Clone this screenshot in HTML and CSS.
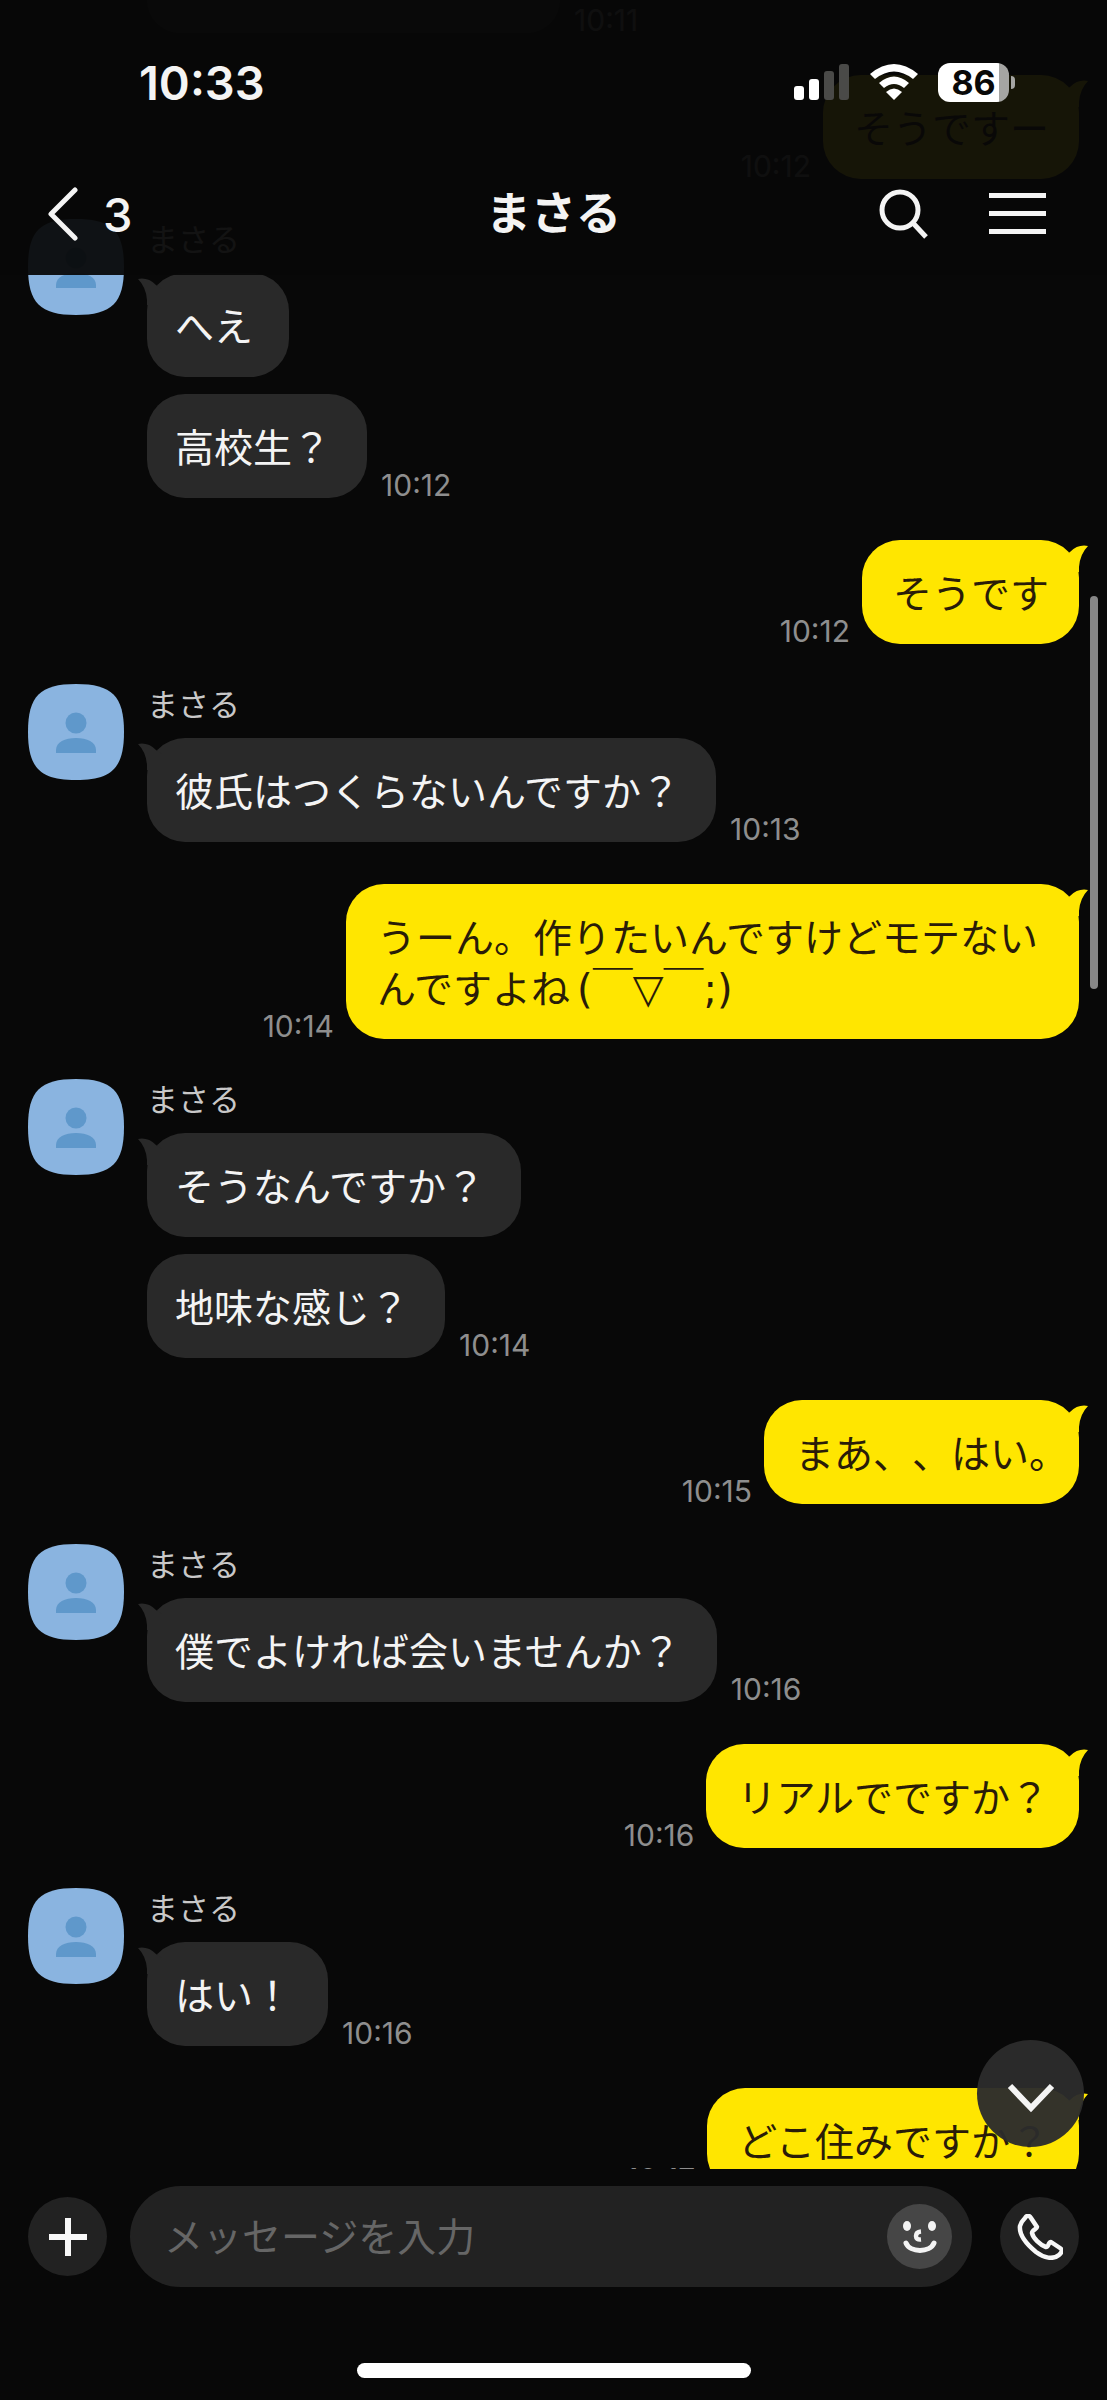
FILE: index.html
```html
<!DOCTYPE html>
<html lang="ja">
<head>
<meta charset="utf-8">
<meta name="viewport" content="width=device-width, initial-scale=1">
<title>まさる</title>
<link rel="stylesheet" href="styles.css">
</head>
<body>
<svg class="defs" aria-hidden="true">
  <symbol id="avatar" viewBox="0 0 96 96">
    <path fill="#8ab4e0" d="M48 0C84 0 96 12 96 48S84 96 48 96 0 84 0 48 12 0 48 0Z"/>
    <circle cx="48" cy="39" r="10.500" fill="#5f98cb"/>
    <path fill="#5f98cb" d="M28 69V66C28 58 37 54 48 54S68 58 68 66V69Z"/>
  </symbol>
  <symbol id="tail" viewBox="0 0 24 32">
    <path d="M0 6Q10 4 18 12L24 16V32H9V27Q8 14 0 6Z"/>
  </symbol>
</svg>
<div class="app">
  <header class="top">
    <div class="status">
      <span class="clock">10:33</span>
      <div class="status-icons">
        <svg width="56" height="36" viewBox="0 0 56 36" aria-hidden="true">
          <g fill="#fff"><rect y="22" width="10" height="14" rx="3"/><rect x="15" y="15" width="10" height="21" rx="3"/></g>
          <g fill="#4a4a48"><rect x="30" y="7" width="10" height="29" rx="3"/><rect x="45" width="10" height="36" rx="3"/></g>
        </svg>
        <svg width="48" height="36" viewBox="0 0 48 36" fill="#fff" aria-hidden="true">
          <path d="M0 10Q24-10 48 10L43 15Q24 0 5 15Z"/>
          <path d="M9 19Q24 6 39 19L34 24Q24 16 14 24Z"/>
          <path d="M16 28Q24 21 32 28L24 36Z"/>
        </svg>
        <div class="battery"><span class="battery-level">86</span></div>
      </div>
    </div>
    <nav class="nav">
      <button class="back" type="button" aria-label="戻る">
        <svg width="30" height="54" viewBox="0 0 30 54" fill="none" stroke="#f4f4f4" stroke-width="5" stroke-linecap="round" stroke-linejoin="round"><path d="M27 3L3 27L27 51"/></svg>
        <span>3</span>
      </button>
      <h1 class="title">まさる</h1>
      <div class="actions">
        <button type="button" aria-label="検索">
          <svg width="50" height="50" viewBox="0 0 50 50" fill="none" stroke="#f4f4f4" stroke-width="5"><circle cx="21" cy="21" r="18"/><path d="M34 34L47 48"/></svg>
        </button>
        <button type="button" aria-label="メニュー">
          <svg width="57" height="42" viewBox="0 0 57 42" fill="#f4f4f4"><path d="M0 0H57V5H0ZM0 18H57V23H0ZM0 36H57V41H0Z"/></svg>
        </button>
      </div>
    </nav>
  </header>

  <main class="feed">
    <section class="group">
      <div class="body">
        <div class="line"><div class="bubble cut"></div><time>10:11</time></div>
      </div>
    </section>
    <section class="group mine">
      <div class="line"><time>10:12</time><p class="bubble"><svg class="tail"><use href="#tail"/></svg>そうですー</p></div>
    </section>
    <section class="group theirs">
      <svg class="avatar"><use href="#avatar"/></svg>
      <div class="body">
        <h2 class="name">まさる</h2>
        <div class="line"><p class="bubble"><svg class="tail"><use href="#tail"/></svg>へえ</p></div>
        <div class="line"><p class="bubble">高校生？</p><time>10:12</time></div>
      </div>
    </section>
    <section class="group mine">
      <div class="line"><time>10:12</time><p class="bubble"><svg class="tail"><use href="#tail"/></svg>そうです</p></div>
    </section>
    <section class="group theirs">
      <svg class="avatar"><use href="#avatar"/></svg>
      <div class="body">
        <h2 class="name">まさる</h2>
        <div class="line"><p class="bubble"><svg class="tail"><use href="#tail"/></svg>彼氏はつくらないんですか？</p><time>10:13</time></div>
      </div>
    </section>
    <section class="group mine">
      <div class="line"><time>10:14</time><p class="bubble"><svg class="tail"><use href="#tail"/></svg>うーん。作りたいんですけどモテないんですよね<span class="kaomoji">(￣▽￣;)</span></p></div>
    </section>
    <section class="group theirs">
      <svg class="avatar"><use href="#avatar"/></svg>
      <div class="body">
        <h2 class="name">まさる</h2>
        <div class="line"><p class="bubble"><svg class="tail"><use href="#tail"/></svg>そうなんですか？</p></div>
        <div class="line"><p class="bubble">地味な感じ？</p><time>10:14</time></div>
      </div>
    </section>
    <section class="group mine">
      <div class="line"><time>10:15</time><p class="bubble"><svg class="tail"><use href="#tail"/></svg><span class="hang">まあ、、はい。</span></p></div>
    </section>
    <section class="group theirs">
      <svg class="avatar"><use href="#avatar"/></svg>
      <div class="body">
        <h2 class="name">まさる</h2>
        <div class="line"><p class="bubble"><svg class="tail"><use href="#tail"/></svg>僕でよければ会いませんか？</p><time>10:16</time></div>
      </div>
    </section>
    <section class="group mine">
      <div class="line"><time>10:16</time><p class="bubble"><svg class="tail"><use href="#tail"/></svg>リアルでですか？</p></div>
    </section>
    <section class="group theirs">
      <svg class="avatar"><use href="#avatar"/></svg>
      <div class="body">
        <h2 class="name">まさる</h2>
        <div class="line"><p class="bubble"><svg class="tail"><use href="#tail"/></svg>はい！</p><time>10:16</time></div>
      </div>
    </section>
    <section class="group mine">
      <div class="line"><time>10:17</time><p class="bubble"><svg class="tail"><use href="#tail"/></svg>どこ住みですか？</p></div>
    </section>
    <div class="thumb"></div>
    <button class="jump" type="button" aria-label="最新のメッセージへ">
      <svg width="48" height="30" viewBox="0 0 48 30" fill="none" stroke="#f4f4f4" stroke-width="6"><path d="M3 3L24 25L45 3"/></svg>
    </button>
  </main>

  <footer class="bottom">
    <form class="composer">
      <button class="round" type="button" aria-label="追加">
        <svg width="38" height="38" viewBox="0 0 38 38" fill="#f8f8f8"><path d="M16 0H22V16H38V22H22V38H16V22H0V16H16Z"/></svg>
      </button>
      <div class="field">
        <input type="text" aria-label="メッセージ" placeholder="メッセージを入力">
        <button class="emoji" type="button" aria-label="スタンプ">
          <svg width="36" height="34" viewBox="0 0 36 34" fill="#f4f4f4"><ellipse cx="5" cy="6" rx="4" ry="5"/><ellipse cx="30" cy="6" rx="4" ry="5"/><path d="M19 11.500Q14 12 14 16T19 19.500" fill="none" stroke="#f4f4f4" stroke-width="4.500"/><path d="M4 23C8 33 28 33 32 23" fill="none" stroke="#f4f4f4" stroke-width="5" stroke-linecap="round"/></svg>
        </button>
      </div>
      <button class="round" type="button" aria-label="通話">
        <svg width="46" height="46" viewBox="0 0 46 46" fill="none" stroke="#f8f8f8" stroke-width="4.500" stroke-linejoin="round"><path d="M8 4C10 1 12 1 14 4L20 13C20 15 15 16 15 19C16 24 23 31 29 33C32 33 31 28 34 28L43 34C46 36 45 38 42 41C36 46 27 44 19 38C8 29 2 20 3 12C4 8 6 6 8 4Z"/></svg>
      </button>
    </form>
    <div class="home"></div>
  </footer>
</div>
</body>
</html>
```
FILE: styles.css
```css
* { box-sizing: border-box; }
body {
  margin: 0;
  background: #080808;
  color: #f4f4f4;
  font-family: Inter, "Noto Sans CJK JP", sans-serif;
}
h1, h2, p { margin: 0; }
svg { display: block; flex: none; }
.defs { position: absolute; width: 0; height: 0; }
button {
  display: flex;
  align-items: center;
  justify-content: center;
  padding: 0;
  border: 0;
  background: none;
  color: inherit;
  font: inherit;
}
.app {
  position: relative;
  display: flex;
  flex-direction: column;
  height: 100vh;
}

/* Translucent header over the scrolled messages */
.top {
  position: absolute;
  z-index: 2;
  top: 0;
  left: 0;
  right: 0;
  padding: 52px 0 26px;
  background: rgba(7, 7, 7, .94);
}
.status {
  display: flex;
  align-items: center;
  justify-content: space-between;
  height: 60px;
  padding: 0 98px 0 139px;
}
.clock { font-size: 47px; font-weight: 600; }
.status-icons { display: flex; align-items: center; gap: 20px; }
.battery {
  position: relative;
  width: 71px;
  height: 39px;
  border-radius: 12px;
  background: linear-gradient(90deg, #fff 61px, #a5a5a3 61px);
}
.battery::after {
  content: "";
  position: absolute;
  left: 73px;
  top: 13px;
  width: 4px;
  height: 13px;
  border-radius: 0 4px 4px 0;
  background: #a5a5a3;
}
.battery-level {
  display: block;
  color: #080808;
  font-size: 34px;
  font-weight: 700;
  line-height: 39px;
  text-align: center;
}
.nav {
  display: grid;
  grid-template-columns: 1fr auto 1fr;
  align-items: center;
  height: 70px;
  margin-top: 67px;
}
.back { justify-self: start; gap: 25px; margin-left: 48px; font-size: 47px; font-weight: 500; }
.title { font-size: 45px; font-weight: 700; line-height: 60px; }
.actions { display: flex; align-items: center; justify-self: end; gap: 60px; margin-right: 61px; }

/* Messages */
.feed {
  position: relative;
  flex: 1;
  min-height: 0;
  overflow: hidden;
}
.group { padding: 0 28px; }
.theirs { display: flex; gap: 23px; margin: 40px 0 42px; }
.group:first-child { padding-left: 147px; margin-bottom: 42px; }
.avatar { width: 96px; height: 96px; }
.body { flex: 1; }
.name {
  height: 54px;
  color: #c8c8c8;
  font-size: 31px;
  font-weight: 400;
  line-height: 42px;
}
.line { display: flex; align-items: flex-end; gap: 14px; }
.line + .line { margin-top: 17px; }
.mine .line { justify-content: flex-end; gap: 12px; }
time { color: #8e8e8e; font-size: 30px; line-height: 26px; }
.bubble {
  position: relative;
  max-width: 733px;
  padding: 26px 36px 27px 28px;
  border-radius: 38px;
  background: #292929;
  font-family: "Noto Sans CJK JP", sans-serif;
  font-size: 39px;
  line-height: 51px;
  text-spacing-trim: space-all;
}
.mine .bubble {
  padding: 26px 30px 27px 31px;
  background: #ffe600;
  color: #2a1c08;
}
.kaomoji {
  margin-left: 7px;
  font-family: "DejaVu Sans", "Noto Sans CJK JP", sans-serif;
  font-size: 40px;
  line-height: 39px;
}
/* A closing full stop hangs by half its width */
.hang { display: block; margin-right: -19px; white-space: nowrap; }
.cut {
  width: 413px;
  height: 33px;
  padding: 0;
  border-radius: 0 0 38px 38px;
}
.tail {
  position: absolute;
  top: 0;
  left: -9px;
  width: 24px;
  height: 32px;
  fill: #292929;
}
.mine .tail {
  left: auto;
  right: -9px;
  fill: #ffe600;
  transform: scaleX(-1);
}
.thumb {
  position: absolute;
  top: 596px;
  right: 9px;
  width: 8px;
  height: 393px;
  border-radius: 4px;
  background: #868686;
}
.jump {
  position: absolute;
  right: 23px;
  bottom: 22px;
  width: 107px;
  height: 107px;
  padding-top: 8px;
  border-radius: 50%;
  background: rgba(44, 44, 44, .96);
}

/* Composer */
.bottom {
  display: flex;
  flex-direction: column;
  align-items: center;
  padding: 17px 28px 22px;
}
.composer { display: flex; align-items: center; width: 100%; }
.round {
  flex: none;
  width: 79px;
  height: 79px;
  border-radius: 50%;
  background: #222;
}
.field {
  display: flex;
  flex: 1;
  align-items: center;
  height: 101px;
  margin: 0 28px 0 23px;
  padding: 0 20px 0 34px;
  border-radius: 51px;
  background: #222;
}
.field input {
  flex: 1;
  min-width: 0;
  padding: 0 0 6px;
  border: 0;
  outline: 0;
  background: none;
  color: #f4f4f4;
  font-family: "Noto Sans CJK JP", sans-serif;
  font-size: 39px;
}
.field input::placeholder { color: #666; opacity: 1; }
.emoji {
  width: 65px;
  height: 65px;
  border-radius: 50%;
  background: #464646;
}
.home {
  width: 394px;
  height: 15px;
  margin-top: 76px;
  border-radius: 8px;
  background: #fff;
}
```
